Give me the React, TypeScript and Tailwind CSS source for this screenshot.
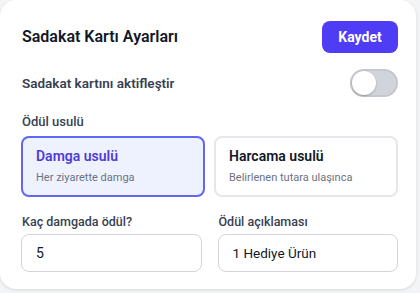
import { useState } from 'react'

export default function App() {
  const [mode, setMode] = useState<'stamp' | 'spend'>('stamp')
  const [enabled, setEnabled] = useState(false)

  return (
    <div className="min-h-screen bg-[#f3f4f6] font-['Roboto',sans-serif]">
      <div className="w-[416px] h-[289px] rounded-2xl bg-white pl-[21px] pr-[18px] pt-[21px] shadow-[0_1px_3px_rgba(15,23,42,0.12)]">
        <div className="flex items-center justify-between">
          <h2 className="pl-px text-[16px] font-semibold text-[#111827]">Sadakat Kartı Ayarları</h2>
          <button
            type="button"
            className="h-8 w-[76px] rounded-lg bg-[#4f3cf5] text-[14px] font-bold text-white"
          >
            Kaydet
          </button>
        </div>

        <div className="mt-4 flex h-7 items-center justify-between">
          <span className="pl-px text-[13.5px] font-semibold text-[#374151]">Sadakat kartını aktifleştir</span>
          <button
            type="button"
            onClick={() => setEnabled(v => !v)}
            className={`relative h-7 w-12 rounded-full border-2 ${enabled ? 'border-[#4f3cf5] bg-[#4f3cf5]' : 'border-[#c4c7cd] bg-[#d1d5db]'}`}
          >
            <span
              className={`absolute top-0 h-6 w-6 rounded-full bg-white shadow-[0_1px_2px_rgba(0,0,0,0.25)] ${enabled ? 'left-5' : 'left-0'}`}
            />
          </button>
        </div>

        <div className="mt-[15px] pl-px text-[13px] font-medium text-[#374151]">Ödül usulü</div>

        <div className="mt-[4px] grid grid-cols-2 gap-[9px]">
          <button
            type="button"
            onClick={() => setMode('stamp')}
            className={`h-[61px] rounded-lg border-2 px-[13px] text-left ${mode === 'stamp' ? 'border-[#6366f1] bg-[#eef2ff]' : 'border-[#e5e7eb] bg-white'}`}
          >
            <div className={`text-[14px] font-semibold ${mode === 'stamp' ? 'text-[#4f3cd6]' : 'text-[#111827]'}`}>Damga usulü</div>
            <div className="mt-[3px] text-[11px] text-[#6b7280]">Her ziyarette damga</div>
          </button>
          <button
            type="button"
            onClick={() => setMode('spend')}
            className={`h-[61px] rounded-lg border-2 px-[13px] text-left ${mode === 'spend' ? 'border-[#6366f1] bg-[#eef2ff]' : 'border-[#e5e7eb] bg-white'}`}
          >
            <div className={`text-[14px] font-semibold ${mode === 'spend' ? 'text-[#4f3cd6]' : 'text-[#111827]'}`}>Harcama usulü</div>
            <div className="mt-[3px] text-[11px] text-[#6b7280]">Belirlenen tutara ulaşınca</div>
          </button>
        </div>

        <div className="mt-4 grid grid-cols-2 gap-4">
          <label className="block">
            <span className="block pl-px text-[12.5px] font-medium text-[#374151]">Kaç damgada ödül?</span>
            <input
              defaultValue="5"
              className="mt-[3px] h-[38px] w-full rounded-lg border border-[#d1d5db] px-[14px] text-[14px] text-[#111827] outline-none"
            />
          </label>
          <label className="block">
            <span className="block pl-px text-[12.5px] font-medium text-[#374151]">Ödül açıklaması</span>
            <input
              defaultValue="1 Hediye Ürün"
              className="mt-[3px] h-[38px] w-full rounded-lg border border-[#d1d5db] px-[14px] text-[13.5px] text-[#111827] outline-none"
            />
          </label>
        </div>
      </div>
    </div>
  )
}
